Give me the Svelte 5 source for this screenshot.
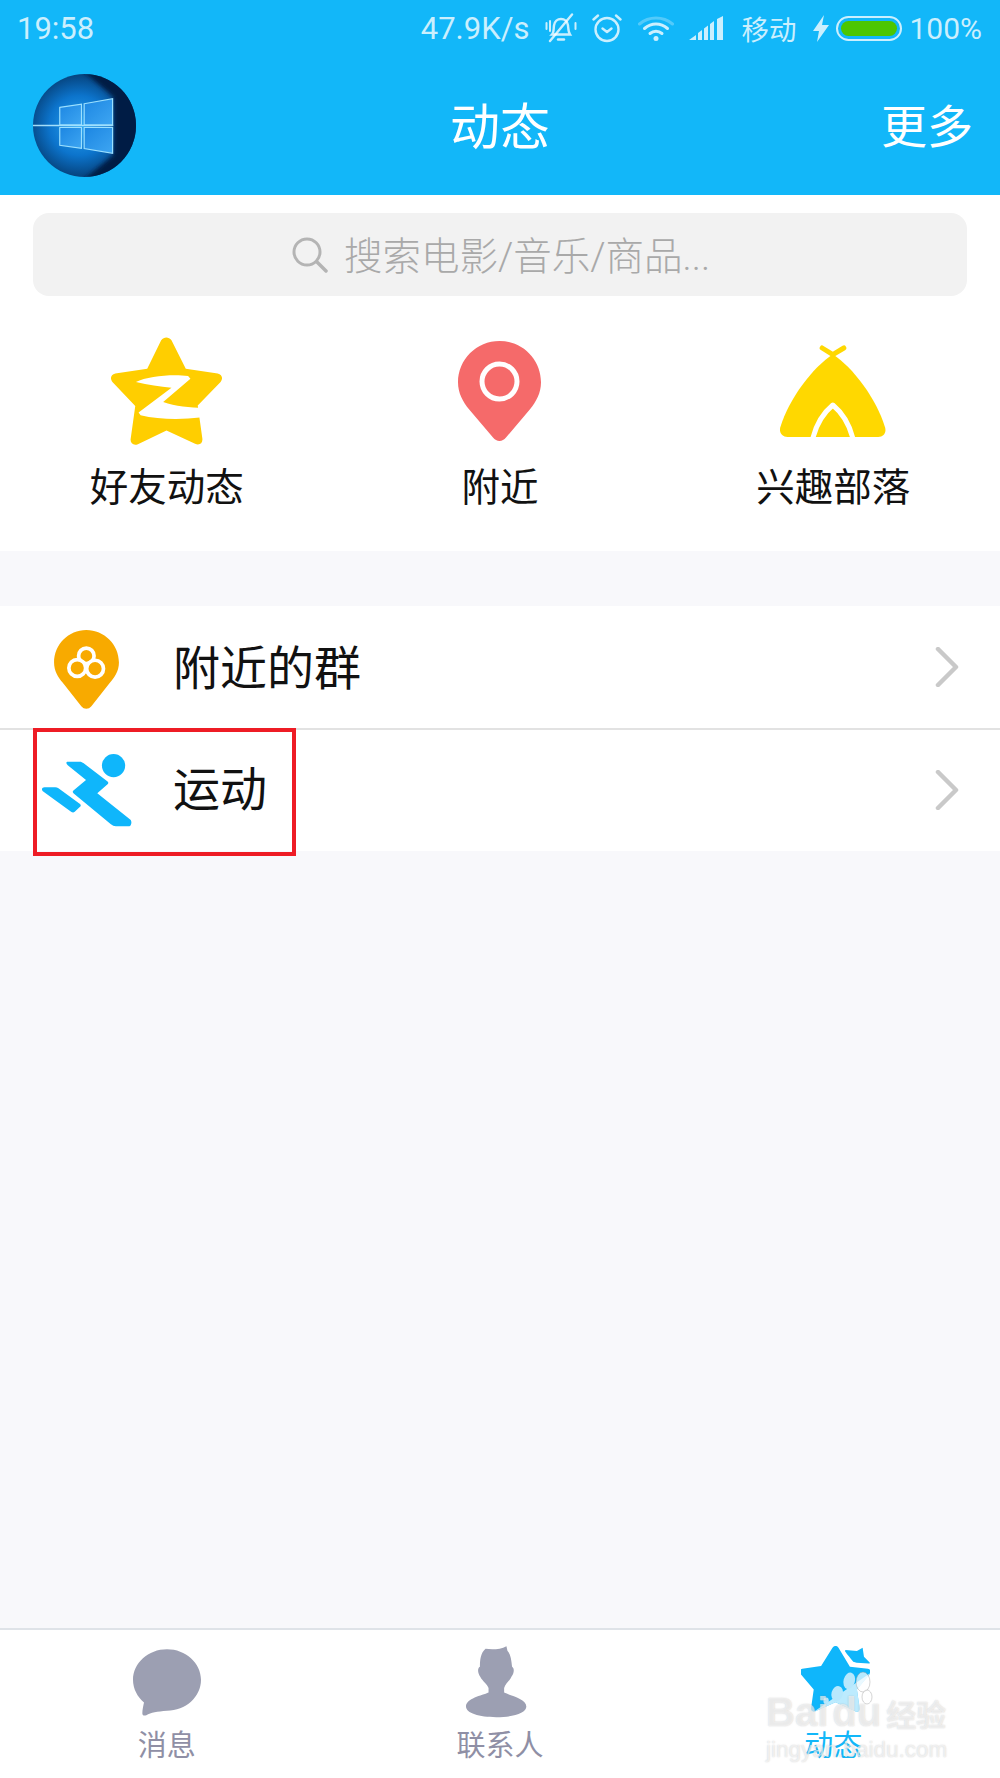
<script lang="ts">
	const shortcuts = [
		{ id: 'friends', label: '好友动态' },
		{ id: 'nearby', label: '附近' },
		{ id: 'tribe', label: '兴趣部落' }
	];
	const tabs = [
		{ id: 'msg', label: '消息', active: false },
		{ id: 'contacts', label: '联系人', active: false },
		{ id: 'feed', label: '动态', active: true }
	];
</script>

<div class="page">
	<header class="header">
		<div class="status">
			<span class="time">19:58</span>
			<span class="speed">47.9K/s</span>
			<svg class="st bell" viewBox="0 0 32 30" fill="none" stroke="currentColor" stroke-width="2.4" stroke-linecap="round">
				<path d="M7 21.500c2-2 1.500-5 2-9 .6-4 3.500-6.500 7-6.500s6.500 2.500 7 6.500c.3 3 .3 6.500 2 9z" />
				<path d="M13 26.500h6" />
				<path d="M27 1.500 5 28" />
				<path d="M1.500 10v6M30.500 10v6M5 8v10" stroke-width="2" />
			</svg>
			<svg class="st alarm" viewBox="0 0 30 30" fill="none" stroke="currentColor" stroke-width="2.400" stroke-linecap="round" stroke-linejoin="round">
				<circle cx="15" cy="16.500" r="11.500" />
				<path d="M10.500 15.500 15 19l4.500-3.500" />
				<path d="M1.500 6.500 6 2.500M28.500 6.500 24 2.500" />
			</svg>
			<svg class="st wifi" viewBox="0 0 36 26" fill="none" stroke="currentColor" stroke-linecap="round">
				<path d="M1.500 9C11 1 25 1 34.500 9" stroke-width="3" opacity=".35" />
				<path d="M6.500 13.500c7-6 16-6 23 0" stroke-width="3" />
				<path d="M12 18.500c3.500-3 8.500-3 12 0" stroke-width="3" />
				<circle cx="18" cy="23.500" r="2.500" fill="currentColor" stroke="none" />
			</svg>
			<svg class="st signal" viewBox="0 0 35 24" fill="currentColor">
				<path d="M0 24 7 19v5zM9 17l4-3v10H9zM15 12.500l4-3V24h-4zM21 8l4-3v19h-4zM28 3l6-3v24h-6z" />
			</svg>
			<span class="carrier">移动</span>
			<svg class="st bolt" viewBox="0 0 16 27" fill="currentColor">
				<path d="M11 0 0 16h6l-2 11L16 10H9z" />
			</svg>
			<span class="battery"><span class="battery-fill"></span></span>
			<span class="percent">100%</span>
		</div>
		<div class="nav">
			<svg class="avatar" viewBox="100 222 308 308">
				<defs>
					<radialGradient id="glow" cx="45%" cy="50%" r="58%">
						<stop offset="0" stop-color="#2aa6f4" />
						<stop offset=".5" stop-color="#0c74cc" />
						<stop offset="1" stop-color="#03305f" />
					</radialGradient>
					<linearGradient id="pane" x1="0" y1="0" x2="1" y2="1">
						<stop offset="0" stop-color="#1c86e2" />
						<stop offset="1" stop-color="#3ea6f2" />
					</linearGradient>
					<clipPath id="disc"><circle cx="254" cy="376" r="154" /></clipPath>
					<filter id="soft" x="-20%" y="-20%" width="140%" height="140%"><feGaussianBlur stdDeviation="7" /></filter>
				</defs>
				<circle cx="254" cy="376" r="154" fill="url(#glow)" />
				<g clip-path="url(#disc)">
					<path d="M250 212h170v328H250l90-75V290z" fill="#021c44" filter="url(#soft)" />
					<path d="M100 376h240" stroke="#56c4ff" stroke-width="22" opacity=".45" filter="url(#soft)" />
					<path d="M100 376h240" stroke="#b5eaff" stroke-width="5" opacity=".9" />
				</g>
				<g fill="url(#pane)" stroke="#9be0ff" stroke-width="3.500">
					<path d="M180 322l65-10v62h-65z" />
					<path d="M253 311l85-15v78h-85z" />
					<path d="M180 382h65v62l-65-9z" />
					<path d="M253 382h85v77l-85-14z" />
				</g>
			</svg>
			<h1 class="title">动态</h1>
			<span class="more">更多</span>
		</div>
	</header>

	<section class="top">
		<div class="search">
			<svg class="search-icon" viewBox="0 0 36 36" fill="none" stroke="#b4b4b4" stroke-width="3" stroke-linecap="round">
				<circle cx="15" cy="15" r="13" />
				<path d="M25 25l9 9" stroke-width="3.500" />
			</svg>
			<span class="search-text">搜索电影/音乐/商品...</span>
		</div>
		<div class="shortcuts">
			{#each shortcuts as s}
				<div class="shortcut">
					<div class="shortcut-icon">
						{#if s.id === 'friends'}
							<svg width="113" height="110" viewBox="150 50 340 330">
								<path fill="#ffce00" d="M304 62c9-11 22-11 31 0l43 86 96 14c14 3 17 16 8 27l-68 70 14 100c1 14-9 20-22 15l-86-40-86 41c-13 5-23-2-22-15l14-100-68-71c-9-11-6-24 8-27l96-14z" />
								<path fill="#fff" d="M228 188c35-18 110-24 157-18l7 8-82 70c40 14 90 18 135 17l-25 30c-55 6-125 6-178-7l-6-8 99-75c-35-4-70-8-107-17z" />
							</svg>
						{:else if s.id === 'nearby'}
							<svg width="83" height="100" viewBox="0 0 83 100">
								<path fill="#f56a6a" d="M41.500 0C18.600 0 0 18.500 0 41.300c0 11 5 19.500 11 27L35 96.500c3.500 4.600 9.500 4.600 13 0L72 68.300c6-7.500 11-16 11-27C83 18.500 64.400 0 41.500 0z" />
								<circle cx="41.500" cy="40.500" r="17.500" fill="none" stroke="#fff" stroke-width="5" />
							</svg>
						{:else}
							<svg width="106" height="92" viewBox="240 72 317 276">
								<path d="M366 81l32 20 33-20" fill="none" stroke="#ffd800" stroke-width="15" stroke-linecap="round" />
								<path fill="#ffd800" d="M398 100c-60 40-130 130-158 220-3 16 6 28 22 28h272c16 0 25-12 21-28-28-90-97-180-157-220z" />
								<path d="M338 352c10-40 30-75 60-100 30 25 50 60 60 100" fill="none" stroke="#fff" stroke-width="15" stroke-linejoin="round" />
							</svg>
						{/if}
					</div>
					<span class="shortcut-label">{s.label}</span>
				</div>
			{/each}
		</div>
	</section>

	<section class="list">
		<div class="row">
			<div class="row-icon pin-icon">
				<svg width="65" height="79" viewBox="162 90 193 235">
					<path fill="#f8aa00" d="M258 90c-53 0-96 43-96 97 0 25 12 45 26 60l55 70c8 10 22 10 30 0l55-70c14-15 27-35 27-60 0-54-44-97-97-97z" />
					<g fill="#f8aa00" stroke="#fff" stroke-width="11">
						<circle cx="258" cy="167" r="23" />
						<circle cx="231" cy="203" r="25" />
						<circle cx="284" cy="205" r="25" />
					</g>
				</svg>
			</div>
			<span class="row-label">附近的群</span>
			<svg class="chevron" viewBox="0 0 24 40" fill="none" stroke="#c9c9c9" stroke-width="4.500" stroke-linecap="round" stroke-linejoin="round">
				<path d="M3 2l18 18L3 38" />
			</svg>
		</div>
		<div class="row second">
			<div class="row-icon">
				<svg width="90" height="73" viewBox="123 459 270 220" fill="#0fb6fb">
					<circle cx="338" cy="494" r="35" />
					<path d="M200 482h36c5 0 8 2 12 5l72 55c3 3 3 5 0 8l-31 27 100 80c5 5 3 20-4 20h-40c-6 0-10-2-15-6l-112-93c-4-4-4-7 0-10l37-31-55-44c-5-4-6-11 0-11z" />
					<path d="M130 559h32c4 0 7 1 10 3l65 48c3 3 3 5 0 8l-16 15c-3 3-7 3-11 0l-85-62c-5-4-3-12 5-12z" />
				</svg>
			</div>
			<span class="row-label">运动</span>
			<svg class="chevron" viewBox="0 0 24 40" fill="none" stroke="#c9c9c9" stroke-width="4.500" stroke-linecap="round" stroke-linejoin="round">
				<path d="M3 2l18 18L3 38" />
			</svg>
		</div>
		<div class="highlight"></div>
	</section>

	<div class="spacer"></div>

	<nav class="tabs">
		{#each tabs as t}
			<div class="tab" class:active={t.active}>
				<div class="tab-icon">
					{#if t.id === 'msg'}
						<svg width="68" height="67" viewBox="159 119 204 200">
							<path fill="#9c9fb2" d="M261 119c-56 0-102 41-102 92 0 27 13 51 33 68-2 10-5 22-5 32 0 7 5 9 12 6 14-7 32-11 62-13 56 0 102-42 102-93s-46-92-102-92z" />
						</svg>
					{:else if t.id === 'contacts'}
						<svg class="person" width="61" height="72" viewBox="1157 110 184 216">
							<path fill="#9c9fb2" d="M1216 118c20 3 45 2 63-8l3 14c10 10 12 30 14 48 8 5 6 20-2 30-6 14-18 20-22 34v14c18 9 67 18 67 42 0 20-40 32-91 32s-91-12-91-32c0-24 48-33 68-42v-14c-5-14-18-20-25-34-8-10-9-26-1-30 0-20 2-42 17-54z" />
						</svg>
					{:else}
						<svg class="feed-star" width="69" height="67" viewBox="237 108 206 200">
							<defs>
								<clipPath id="star-shape">
									<path d="M331 113c6-7 13-7 18 0l34 57 54 6c9 2 10 9 5 16l-38 46 8 56c1 9-6 13-13 9l-59-27-60 27c-8 3-14-1-13-9l8-56-39-46c-5-7-4-14 5-16l56-8z" />
								</clipPath>
							</defs>
							<path fill="#0fb6fb" d="M331 113c6-7 13-7 18 0l34 57 54 6c9 2 10 9 5 16l-38 46 8 56c1 9-6 13-13 9l-59-27-60 27c-8 3-14-1-13-9l8-56-39-46c-5-7-4-14 5-16l56-8z" />
							<path fill="#0fb6fb" d="M370 120l34 3 17-10 4 27 17 17c1 2 0 3-2 3l-37-2-10-3c-8-10-17-20-25-32z" />
							<path d="M270 308 445 188v132H270z" fill="#fff" opacity=".72" clip-path="url(#star-shape)" />
							<g fill="#b7e8fd">
								<ellipse cx="381" cy="212" rx="17" ry="25" transform="rotate(15 381 212)" />
								<ellipse cx="345" cy="250" rx="17" ry="23" transform="rotate(15 345 250)" />
								<ellipse cx="312" cy="272" rx="8" ry="10" />
							</g>
						</svg>
					{/if}
				</div>
				<span class="tab-label">{t.label}</span>
			</div>
		{/each}
		<div class="watermark">
			<div class="wm-top">
				<svg class="wm-paw" viewBox="0 0 50 40" fill="rgba(255,255,255,.7)" stroke="rgba(150,150,150,.4)" stroke-width="1">
					<ellipse cx="37" cy="12" rx="7" ry="10" />
					<ellipse cx="41" cy="27" rx="5" ry="7" />
				</svg>
				<span class="wm-baidu">Bai</span>
				<span class="wm-baidu du">du</span>
				<span class="wm-cn">经验</span>
			</div>
			<div class="wm-url">jingyan.baidu.com</div>
		</div>
	</nav>
</div>

<style>
	:global(body) {
		margin: 0;
	}

	.page {
		position: relative;
		display: flex;
		flex-direction: column;
		width: 1000px;
		height: 1778px;
		overflow: hidden;
		background: #f8f8fb;
		font-family: Roboto, 'Noto Sans CJK SC', sans-serif;
	}

	.header {
		background: #12b7f9;
		height: 195px;
		color: #fff;
	}

	.status {
		display: flex;
		align-items: center;
		height: 56px;
		padding: 0 18px 0 17px;
		color: rgba(255, 255, 255, 0.78);
		font-size: 31px;
	}

	.time {
		margin-right: auto;
	}

	.speed {
		margin-right: 16px;
	}

	.percent {
		font-size: 30px;
	}

	.st {
		display: block;
		flex: none;
	}

	.bell {
		width: 32px;
		height: 30px;
		margin-right: 15px;
	}

	.alarm {
		width: 30px;
		height: 30px;
		margin-right: 16px;
	}

	.wifi {
		width: 36px;
		height: 26px;
		margin-right: 15px;
	}

	.signal {
		width: 35px;
		height: 24px;
		margin-right: 17px;
	}

	.carrier {
		font-size: 27.5px;
		margin-right: 17px;
	}

	.bolt {
		width: 16px;
		height: 27px;
		margin-right: 7px;
	}

	.battery {
		display: block;
		box-sizing: border-box;
		width: 66px;
		height: 25px;
		padding: 3px;
		border: 2px solid rgba(255, 255, 255, 0.78);
		border-radius: 13px;
		margin-right: 7px;
	}

	.battery-fill {
		display: block;
		height: 100%;
		border-radius: 9px;
		background: #4cc600;
	}

	.nav {
		display: grid;
		grid-template-columns: 1fr auto 1fr;
		align-items: center;
		height: 139px;
		padding: 0 27px;
	}

	.avatar {
		display: block;
		width: 103px;
		height: 103px;
		margin-left: 6px;
	}

	.title {
		margin: 4px 0 0;
		font-size: 50px;
		font-weight: 400;
		line-height: 1;
	}

	.more {
		justify-self: end;
		margin-top: 2px;
		font-size: 46px;
		font-weight: 400;
		line-height: 1;
	}

	.top {
		background: #fff;
		height: 356px;
		padding-top: 18px;
		box-sizing: border-box;
	}

	.search {
		display: flex;
		align-items: center;
		justify-content: center;
		height: 83px;
		margin: 0 33px;
		border-radius: 16px;
		background: #f2f2f2;
	}

	.search-icon {
		width: 36px;
		height: 36px;
		margin: 0 16px 0 2px;
	}

	.search-text {
		font-size: 38.5px;
		font-weight: 300;
		color: #a9a9a9;
		transform: translateY(-2px);
	}

	.shortcuts {
		display: grid;
		grid-template-columns: repeat(3, 1fr);
		padding-top: 38px;
	}

	.shortcut {
		display: flex;
		flex-direction: column;
		align-items: center;
	}

	.shortcut-icon {
		display: flex;
		align-items: center;
		justify-content: center;
		height: 114px;
	}

	.shortcut-label {
		margin-top: 14px;
		font-size: 38.5px;
		line-height: 52px;
		color: #111;
	}

	.list {
		position: relative;
		margin-top: 55px;
		background: #fff;
	}

	.row {
		display: flex;
		align-items: center;
		box-sizing: border-box;
		height: 122px;
		padding-right: 41px;
	}

	.second {
		height: 123px;
		border-top: 2px solid #e2e2e2;
	}

	.second .row-label {
		margin-bottom: 10px;
	}

	.second .chevron {
		margin-bottom: 2px;
	}

	.row-icon {
		display: flex;
		justify-content: center;
		width: 173px;
		flex: none;
	}

	.pin-icon {
		margin-top: 4px;
	}

	.row-label {
		flex: 1;
		margin-bottom: 6px;
		font-size: 47px;
		color: #111;
	}

	.chevron {
		width: 24px;
		height: 40px;
	}

	.highlight {
		position: absolute;
		left: 33px;
		top: 122px;
		box-sizing: border-box;
		width: 263px;
		height: 128px;
		border: 4px solid #ee1c25;
	}

	.spacer {
		flex: 1;
	}

	.tabs {
		position: relative;
		display: grid;
		grid-template-columns: repeat(3, 1fr);
		height: 150px;
		box-sizing: border-box;
		border-top: 2px solid #dfe3e8;
		background: #fff;
	}

	.tab {
		display: flex;
		flex-direction: column;
		align-items: center;
		color: #8f8fa5;
	}

	.tab.active {
		color: #12b7f9;
	}

	.tab-icon {
		display: flex;
		align-items: center;
		height: 72px;
		margin-top: 16px;
	}

	.person {
		margin-right: 6px;
	}

	.feed-star {
		margin: 0 0 5px 4px;
	}

	.tab-label {
		margin-top: 6px;
		font-size: 29px;
		line-height: 44px;
	}

	.watermark {
		position: absolute;
		left: 766px;
		top: 60px;
		width: 190px;
		color: rgba(255, 255, 255, 0.6);
		font-family: 'Liberation Sans', sans-serif;
		text-shadow: 0 0 1.5px rgba(130, 130, 130, 0.4);
	}

	.wm-top {
		position: relative;
		display: flex;
		align-items: baseline;
		height: 44px;
	}

	.wm-baidu {
		font-size: 40px;
		font-weight: 700;
		line-height: 44px;
	}

	.du {
		margin-left: 4px;
	}

	.wm-paw {
		position: absolute;
		left: 60px;
		top: -20px;
		width: 50px;
		height: 40px;
	}

	.wm-cn {
		margin-left: 5px;
		font-family: 'Noto Sans CJK SC', sans-serif;
		font-size: 30px;
		font-weight: 700;
	}

	.wm-url {
		margin-top: 2px;
		font-size: 22.5px;
		line-height: 28px;
		white-space: nowrap;
	}
</style>
